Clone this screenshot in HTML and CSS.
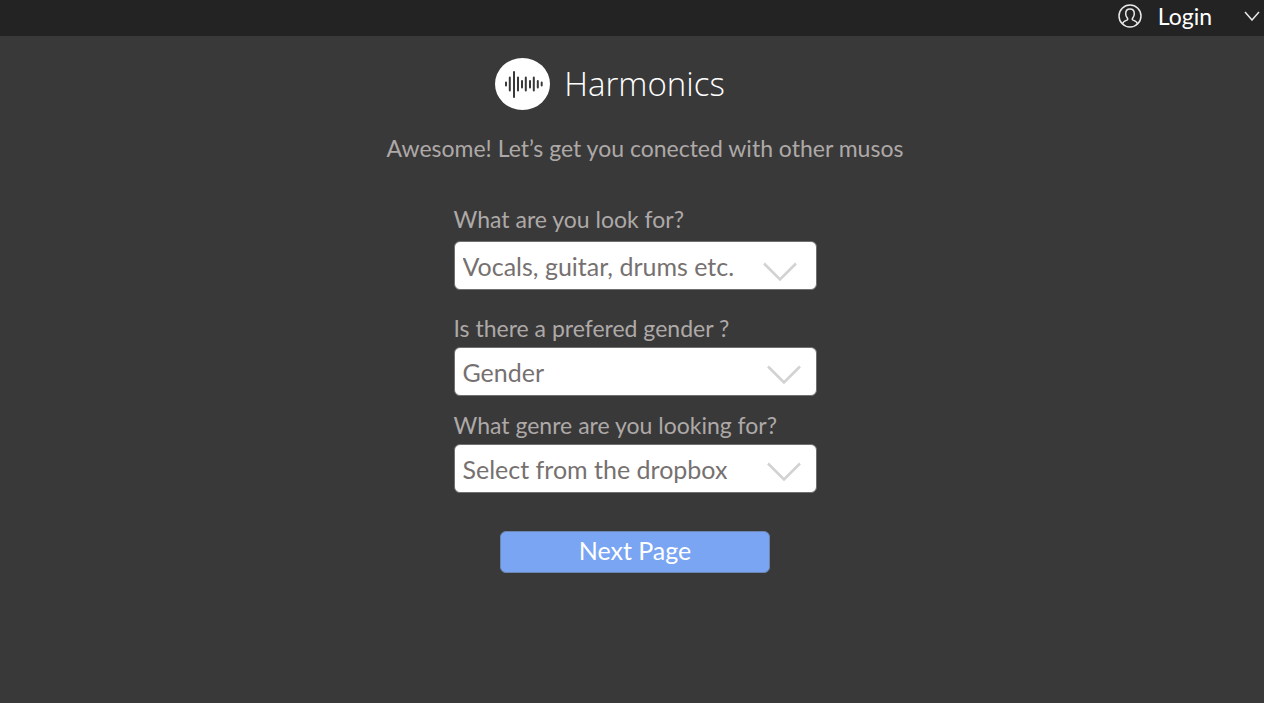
FILE: index.html
```html
<!DOCTYPE html>
<html lang="en">
<head>
<meta charset="utf-8">
<meta name="viewport" content="width=device-width, initial-scale=1">
<title>Harmonics</title>
<link rel="stylesheet" href="styles.css">
</head>
<body>
<header class="topbar">
  <a class="login" href="#">
    <svg class="login-icon" viewBox="0 0 24 24" aria-hidden="true">
      <circle cx="12" cy="12" r="11"/>
      <path d="M4.500 20c.4-2.300 1.900-3 3.900-3.600 1.400-.4 1.700-1.300.9-2.400C8.300 12.800 7.700 11.500 7.700 9.800c0-2.800 1.700-4.700 4.300-4.700s4.300 1.900 4.300 4.700c0 1.700-.6 3-1.600 4.200-.8 1.100-.5 2 .9 2.400 2 .6 3.500 1.300 3.900 3.600"/>
    </svg>
    <span>Login</span>
  </a>
  <button class="menu-toggle" type="button" aria-label="Open menu">
    <svg class="menu-chevron" viewBox="0 0 16 10" aria-hidden="true"><path d="M1 1l7 8 7-8"/></svg>
  </button>
</header>
<main class="page">
  <div class="brand">
    <svg class="brand-mark" viewBox="0 0 55 52" aria-hidden="true">
      <ellipse class="brand-disc" cx="27.500" cy="26" rx="27.500" ry="26"/>
      <path class="brand-wave" d="M11 24.500v3M14.800 19.500v13M19 14v25M23 19.500v13M27 23v6.500M30.800 19.500v13M35 23v6.500M38.800 19.500v13M42.800 23v6.500M46.700 24.500v3"/>
    </svg>
    <h1 class="brand-name">Harmonics</h1>
  </div>
  <p class="tagline">Awesome! Let’s get you conected with other musos</p>
  <form class="match-form">
    <div class="field field-instrument">
      <label class="label" for="instrument">What are you look for?</label>
      <div class="picker">
        <select class="select" id="instrument"><option>Vocals, guitar, drums etc.</option></select>
        <svg class="chevron" viewBox="0 0 34 20" aria-hidden="true"><path d="M1 1.500l16 16 16-16"/></svg>
      </div>
    </div>
    <div class="field">
      <label class="label" for="gender">Is there a prefered gender ?</label>
      <div class="picker">
        <select class="select" id="gender"><option>Gender</option></select>
        <svg class="chevron" viewBox="0 0 34 20" aria-hidden="true"><path d="M1 1.500l16 16 16-16"/></svg>
      </div>
    </div>
    <div class="field">
      <label class="label" for="genre">What genre are you looking for?</label>
      <div class="picker">
        <select class="select" id="genre"><option>Select from the dropbox</option></select>
        <svg class="chevron" viewBox="0 0 34 20" aria-hidden="true"><path d="M1 1.500l16 16 16-16"/></svg>
      </div>
    </div>
    <button class="next" type="submit">Next Page</button>
  </form>
</main>
</body>
</html>
```
FILE: styles.css
```css
* {
  box-sizing: border-box;
}

body {
  margin: 0;
  min-height: 100vh;
  background: #393939;
  color: #aea9a8;
  font-family: Lato, "Liberation Sans", sans-serif;
  font-size: 23px;
  line-height: 32px;
}

.topbar {
  display: flex;
  align-items: center;
  justify-content: flex-end;
  gap: 32px;
  height: 36px;
  padding: 0 4px 4px 0;
  background: #232323;
}

.login {
  display: flex;
  align-items: center;
  gap: 16px;
  color: #fff;
  text-decoration: none;
}

.login-icon {
  width: 24px;
  height: 24px;
  fill: none;
  stroke: #e8e8e8;
  stroke-width: 1.5;
}

.menu-toggle {
  display: flex;
  padding: 0;
  border: 0;
  background: none;
  cursor: pointer;
}

.menu-chevron {
  width: 16px;
  height: 10px;
  fill: none;
  stroke: #e8e8e8;
  stroke-width: 1.5;
}

.page {
  display: flex;
  flex-direction: column;
  align-items: center;
  padding: 22px 0 32px 6px;
}

.brand {
  display: flex;
  align-items: center;
  gap: 14px;
  margin-right: 50px;
}

.brand-mark {
  width: 55px;
  height: 52px;
}

.brand-disc {
  fill: #fff;
}

.brand-wave {
  fill: none;
  stroke: #393939;
  stroke-width: 2;
  stroke-linecap: round;
}

.brand-name {
  margin: 0;
  color: #fff;
  font-family: "Open Sans", "Noto Sans", sans-serif;
  font-size: 33px;
  font-weight: 300;
  line-height: 52px;
}

.tagline {
  margin: 22px 0 0 20px;
}

.match-form {
  display: flex;
  flex-direction: column;
  gap: 13px;
  width: 100%;
  max-width: 363px;
  margin-top: 39px;
}

.field {
  display: flex;
  flex-direction: column;
  gap: 3px;
}

.field-instrument {
  gap: 6px;
  margin-bottom: 9px;
}

.picker {
  display: grid;
  align-items: center;
}

.select,
.chevron {
  grid-area: 1 / 1;
}

.select {
  appearance: none;
  width: 100%;
  height: 49px;
  padding: 0 56px 0 8px;
  border: 1px solid #707070;
  border-radius: 6px;
  background: #fff;
  color: #767170;
  font: inherit;
  font-size: 25px;
}

.chevron {
  justify-self: end;
  width: 34px;
  height: 20px;
  margin: 6px 16px 0 0;
  fill: none;
  stroke: #d2d2d2;
  stroke-width: 2.5;
  pointer-events: none;
}

.field-instrument .chevron {
  margin: 12px 20px 0 0;
}

.next {
  align-self: center;
  width: 270px;
  max-width: 100%;
  height: 42px;
  margin-top: 25px;
  padding: 0 0 4px;
  border: 1px solid #6f85b0;
  border-radius: 6px;
  background: #7aa5f2;
  color: #fff;
  font: inherit;
  font-size: 25px;
  cursor: pointer;
}
```
